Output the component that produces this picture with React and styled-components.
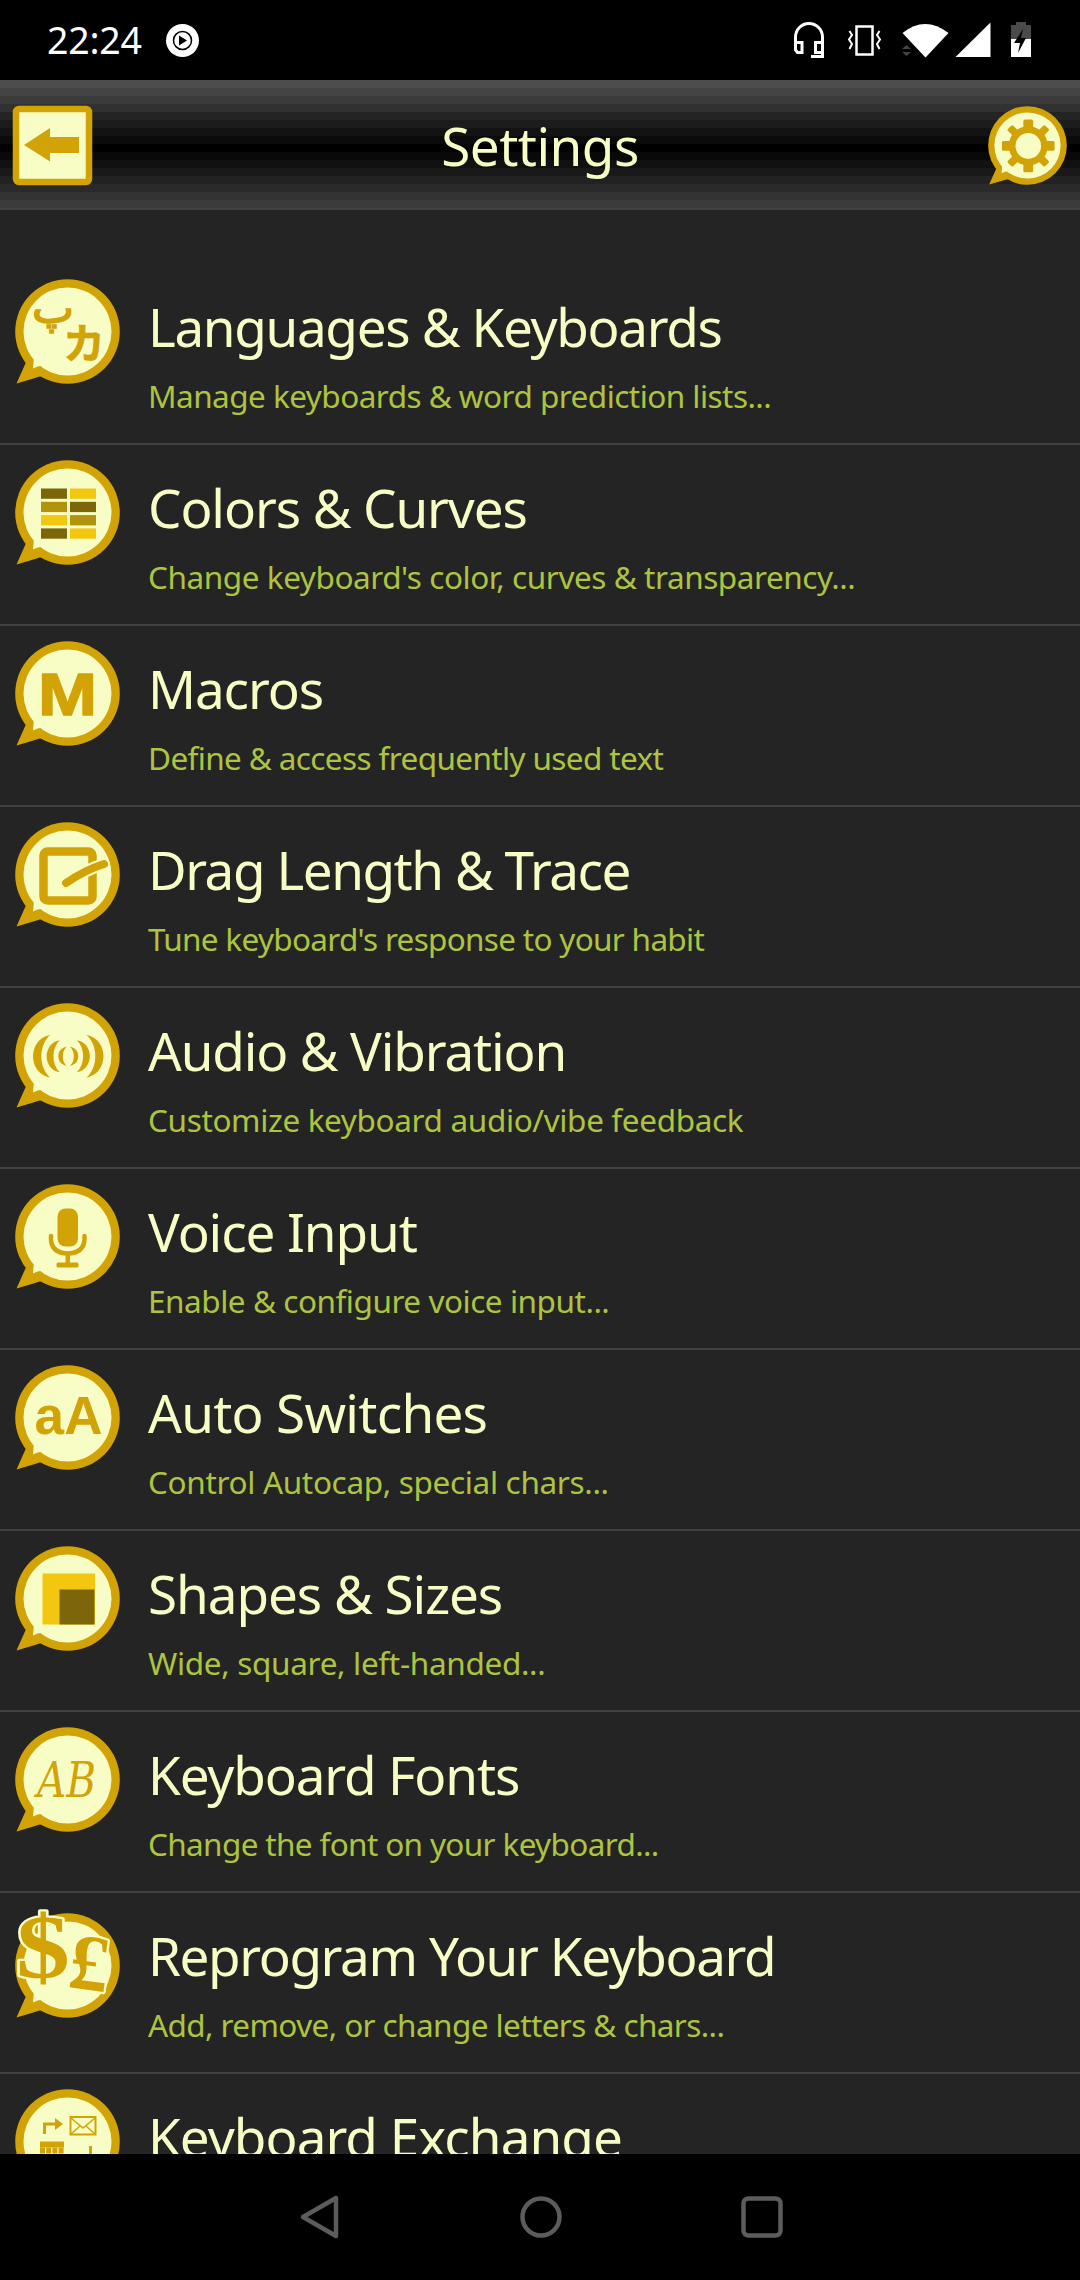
import React from "react";
import styled, { createGlobalStyle } from "styled-components";

const GOLD = "#d2a306";
const CREAM = "#f8fdc6";
const DARK = "#7d6609";
const YELLOW = "#f3c70f";
const UI = `"Noto Sans", "Open Sans", sans-serif`;

const Global = createGlobalStyle`
  * { box-sizing: border-box; }
  body { margin: 0; background: #000; font-family: ${UI}; }
`;
const Screen = styled.div`
  width: 1080px; height: 2280px; display: flex; flex-direction: column; overflow: hidden; background: #000;
`;
const StatusBar = styled.div`
  height: 80px; flex: none; display: flex; align-items: center; padding: 0 44px 0 47px; color: #fff;
`;
const Clock = styled.span`font-size: 37.5px; line-height: 80px; letter-spacing: -0.2px; margin-right: 24px;`;
const Spacer = styled.div`flex: 1;`;
const Svg = styled.svg`display: block; flex: none; overflow: visible;`;

const bands = ["4d4d4d","444444","3b3b3b","313131","242424","1c1c1c","131313","0b0b0b","000000","090909","111111","191919","222222","2a2a2a","333333","3b3b3b","414141"];
const Header = styled.header`
  height: 130px; flex: none; display: flex; align-items: center; justify-content: space-between; padding: 1px 13px 0;
  background: linear-gradient(${bands.map((c, i) => `#${c} ${i * 8}px ${i * 8 + 8}px`).join(",")});
`;
const HeaderTitle = styled.h1`
  margin: 0; font-weight: 400; font-size: 53px; line-height: 72px; color: ${CREAM}; letter-spacing: -0.5px;
`;
const List = styled.main`
  flex: 1; min-height: 0; overflow: hidden; background: #242424; padding-top: 54px;
`;
const Row = styled.div`
  height: 181px; display: flex; align-items: flex-start; padding: 15px 0 0 15px; border-bottom: 2px solid #414141;
`;
const IconBox = styled.div`width: 133px; flex: none; padding-top: ${p => p.$drop || 0}px;`;
const Texts = styled.div`display: flex; flex-direction: column; white-space: nowrap; padding-top: 12px;`;
const Title = styled.div`
  font-size: 53px; line-height: 72px; color: ${CREAM}; letter-spacing: ${p => p.$ls || 0}px;
`;
const Sub = styled.div`
  font-size: 31.5px; line-height: 44px; margin-top: 11px; color: #adc441; letter-spacing: ${p => p.$ls || 0}px;
`;
const NavBar = styled.nav`
  height: 126px; flex: none; display: flex; align-items: center; justify-content: space-between; padding: 0 297px 0 300px;
`;

function Bubble({ size = 105, children }) {
  return (
    <Svg width={size} height={size} viewBox="0 0 105 105">
      <circle cx="52.5" cy="52.5" r="52.3" fill={GOLD} />
      <path d="M1.5 104.5 L12 81 L30 97 Q26 96.500 20 99 Z" fill={GOLD} />
      <circle cx="52.500" cy="52.500" r="44" fill={CREAM} />
      <path d="M18 89.500 L19 78 L32 88 Q26 85 18 89.500 Z" fill={CREAM} />
      {children}
    </Svg>
  );
}

const glyphs = {
  lang: (
    <g fill={GOLD} stroke={GOLD}>
      <text x="17" y="44" fontSize="42" textLength="42" lengthAdjust="spacingAndGlyphs" strokeWidth="1.5" fontFamily="DejaVu Sans, sans-serif">پ</text>
      <text x="48" y="80" fontSize="42" strokeWidth="0.6" fontWeight="700" fontFamily="Noto Sans CJK JP, sans-serif">カ</text>
    </g>
  ),
  colors: [[DARK, YELLOW], ["#b3920e", DARK], [YELLOW, "#b3920e"], [DARK, YELLOW]].map((r, i) => (
    <g key={i}>
      <rect x="26" y={28.5 + i * 13.3} width="26" height="10.3" fill={r[0]} />
      <rect x="55" y={28.5 + i * 13.3} width="26" height="10.3" fill={r[1]} />
    </g>
  )),
  macro: <text x="23" y="74" fontSize="60" fontWeight="700" textLength="59" lengthAdjust="spacingAndGlyphs" fontFamily="Liberation Sans, sans-serif" fill={GOLD} stroke={GOLD} strokeWidth="1.5" strokeLinejoin="round">M</text>,
  drag: (
    <g fill="none" strokeLinecap="round" strokeLinejoin="round">
      <rect x="28.5" y="29.5" width="49" height="49" rx="4" stroke={GOLD} strokeWidth="8.5" />
      <path d="M51 61 Q70 48 89 42" stroke={CREAM} strokeWidth="12" />
      <path d="M51 61 Q70 48 89 42" stroke={GOLD} strokeWidth="8" />
    </g>
  ),
  audio: (
    <g fill={GOLD}>
      {[1, -1].map(s => (
        <g key={s} transform={`translate(53.3 53.3) scale(${s} 1)`}>
          <path d="M-4 -8 C-11 -5 -11 5 -4 8 C-7 4 -7 -4 -4 -8Z" stroke={GOLD} strokeWidth="1.5" />
          <path d="M-8.5 -16 C-26 -13 -26 13 -8.5 16 C-17 8 -17 -8 -8.5 -16Z" />
          <path d="M-18 -21.5 C-41 -17 -41 17 -18 21.5 C-30 11 -30 -11 -18 -21.5Z" />
        </g>
      ))}
    </g>
  ),
  mic: (
    <g fill={GOLD}>
      <rect x="42.5" y="24.5" width="20.5" height="38" rx="8" />
      <path d="M36 52 V56 Q37 69 52.7 69.5 Q68.500 69 69.500 56 V52" fill="none" stroke={GOLD} strokeWidth="4.5" strokeLinecap="round" />
      <rect x="50.500" y="69" width="4.500" height="11" />
      <rect x="41.5" y="78.5" width="22" height="5" rx="1.500" />
    </g>
  ),
  auto: <text x="19.500" y="68.5" fontSize="53" fontWeight="700" textLength="68" lengthAdjust="spacing" fontFamily="Liberation Sans, sans-serif" fill={GOLD}>aA</text>,
  shapes: (
    <g>
      <rect x="27.5" y="27.5" width="52.5" height="51" fill={YELLOW} />
      <rect x="44.500" y="43.500" width="35" height="35" fill={DARK} />
    </g>
  ),
  fonts: <text x="22" y="70" fontSize="48" fontStyle="italic" textLength="59" lengthAdjust="spacingAndGlyphs" fontFamily="DejaVu Serif, serif" fill={GOLD}>AB</text>,
  money: (
    <g fontFamily="Liberation Serif, serif" fill={GOLD} stroke={CREAM} strokeWidth="4.500" paintOrder="stroke" strokeLinejoin="round">
      <text x="1" y="65" fontSize="92" fontWeight="700" textLength="54" lengthAdjust="spacingAndGlyphs">$</text>
      <text x="54" y="77" fontSize="80" fontWeight="700" transform="rotate(8 75 55)">£</text>
    </g>
  ),
  exchange: (
    <g fill="none" stroke={GOLD} strokeWidth="3">
      <path d="M29.500 45 V35 H41" />
      <path d="M40 29 L48 35 L40 41 Z" fill={GOLD} stroke="none" />
      <rect x="55.500" y="28" width="25" height="17.500" strokeWidth="2" />
      <path d="M56 29 L68 39 L80 29 M56 45 L65 37 M80 45 L71 37" strokeWidth="1.500" />
      <path d="M25 55.500 H49" strokeWidth="6" />
      <path d="M25 61.500 H49" strokeWidth="6" strokeDasharray="5 1.200" />
      <path d="M75.500 57 V66" />
    </g>
  ),
};

const rows = [
  ["lang", "Languages & Keyboards", -1.33, "Manage keyboards & word prediction lists...", -0.54],
  ["colors", "Colors & Curves", -1.1, "Change keyboard's color, curves & transparency...", -0.44],
  ["macro", "Macros", -1.1, "Define & access frequently used text", -0.62],
  ["drag", "Drag Length & Trace", -1.45, "Tune keyboard's response to your habit", -0.7],
  ["audio", "Audio & Vibration", -1.15, "Customize keyboard audio/vibe feedback", -0.36],
  ["mic", "Voice Input", -1.1, "Enable & configure voice input...", -0.46],
  ["auto", "Auto Switches", -0.72, "Control Autocap, special chars...", -0.33],
  ["shapes", "Shapes & Sizes", -1.04, "Wide, square, left-handed...", -0.32],
  ["fonts", "Keyboard Fonts", -1.14, "Change the font on your keyboard...", -0.65],
  ["money", "Reprogram Your Keyboard", -1.39, "Add, remove, or change letters & chars...", -0.6],
  ["exchange", "Keyboard Exchange", -0.94, "", 0],
];

function StatusIcons() {
  return (
    <Svg width="246" height="40" viewBox="790 20 246 40">
      <g fill="none" stroke="#fff" strokeWidth="3">
        <path d="M795.500 50 V37 A13.500 13.500 0 0 1 822.500 37 V56.500 H811" />
        <path d="M795.500 42.500 H802 V52.500 H797.500 L795.500 50 Z M822.500 42.500 H815.500 V52.500 H822.500" />
        <rect x="856.500" y="26.500" width="16" height="28" strokeWidth="2.500" />
        <path d="M849.500 31 L852 35 L849 39.500 L852 44 L849.500 49 M879.500 31 L877 35 L880 39.500 L877 44 L879.500 49" strokeWidth="2" />
      </g>
      <path d="M902.500 33 Q925 15 948.500 33 L925.500 57.500 Z" fill="#fff" />
      <path d="M902 49 L906.500 45 L911 49 Z M902 52 L906.500 56 L911 52 Z" fill="#444" />
      <path d="M955.500 57 L990.500 22.500 V57 Z" fill="#fff" />
      <path d="M1011 39 V25 H1016 V22 H1026 V25 H1031 V39 Z" fill="#4a4a4a" />
      <rect x="1011" y="39" width="20" height="18" fill="#fff" />
      <path d="M1023 29 L1014 43 H1020 L1018 53 L1026 38 H1021 Z" fill="#000" />
    </Svg>
  );
}

export default function App() {
  return (
    <Screen>
      <Global />
      <StatusBar>
        <Clock>22:24</Clock>
        <Svg width="33" height="33" viewBox="0 0 33 33">
          <circle cx="16.500" cy="16.500" r="16.500" fill="#fff" />
          <circle cx="16.500" cy="16.500" r="9" fill="none" stroke="#000" strokeWidth="1.500" />
          <path d="M13 11.500 L21 16.500 L13 21.500 Z" fill="#000" />
        </Svg>
        <Spacer />
        <StatusIcons />
      </StatusBar>
      <Header>
        <Svg width="79" height="79" viewBox="0 0 79 79">
          <rect x="3" y="3" width="73" height="73" rx="3" fill={CREAM} stroke={GOLD} strokeWidth="6.500" />
          <path d="M11 39 L37 22 V31 H66 V47 H37 V55.500 Z" fill={GOLD} />
        </Svg>
        <HeaderTitle>Settings</HeaderTitle>
        <Bubble size={79}>
          <g fill={GOLD} transform="translate(53.500 53)">
            {[0, 45, 90, 135].map(a => (
              <rect key={a} x={a % 90 ? -5 : -6.500} y="-35" width={a % 90 ? 10 : 13} height="70" rx="2" transform={`rotate(${a})`} />
            ))}
            <circle r="26" />
            <circle r="17" fill={CREAM} />
          </g>
        </Bubble>
      </Header>
      <List>
        {rows.map(([icon, title, tls, sub, sls]) => (
          <Row key={title}>
            <IconBox $drop={icon === "money" ? 5 : 0}><Bubble>{glyphs[icon]}</Bubble></IconBox>
            <Texts>
              <Title $ls={tls}>{title}</Title>
              {sub && <Sub $ls={sls}>{sub}</Sub>}
            </Texts>
          </Row>
        ))}
      </List>
      <NavBar>
        <Svg width="40" height="44" viewBox="0 0 40 44"><path d="M3 22 L36 3 V41 Z" fill="none" stroke="#5c5c5c" strokeWidth="4.500" strokeLinejoin="round" /></Svg>
        <Svg width="42" height="42" viewBox="0 0 42 42"><circle cx="21" cy="21" r="18.500" fill="none" stroke="#5c5c5c" strokeWidth="4.500" /></Svg>
        <Svg width="42" height="42" viewBox="0 0 42 42"><rect x="2.500" y="2.500" width="37" height="37" rx="5" fill="none" stroke="#5c5c5c" strokeWidth="4.500" /></Svg>
      </NavBar>
    </Screen>
  );
}
